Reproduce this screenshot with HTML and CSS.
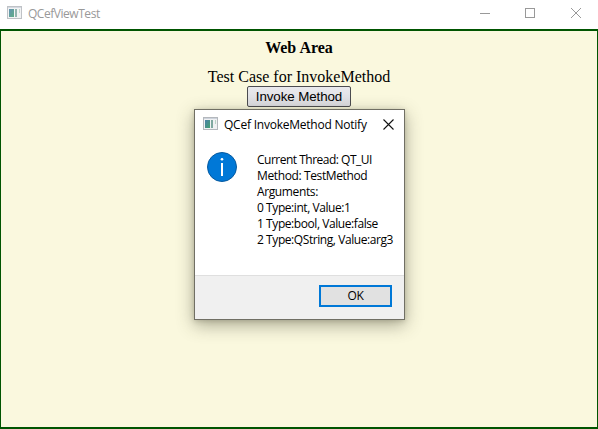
FILE: index.html
```html
<!DOCTYPE html>
<html lang="en">
<head>
<meta charset="utf-8">
<title>QCefViewTest</title>
<link rel="stylesheet" href="styles.css">
</head>
<body>
<svg width="0" height="0" class="defs">
  <defs>
    <linearGradient id="pane" x1="0" y1="0" x2="1" y2="1"><stop offset="0" stop-color="#4a80a8"/><stop offset="1" stop-color="#43a070"/></linearGradient>
    <symbol id="app" viewBox="0 0 15 13">
      <rect x=".5" y=".5" width="14" height="12" fill="#f0f1f3" stroke="#b4b8bd"/>
      <path d="M1 1.5h13" stroke="#cdd3dc"/>
      <rect x="2" y="3" width="5" height="8" fill="url(#pane)"/>
      <rect x="8" y="3" width="2" height="8" fill="#7fa8a0"/>
      <rect x="12" y="3" width="1" height="4" fill="#b9d3c6"/>
    </symbol>
  </defs>
</svg>
<div class="window">
  <header class="titlebar">
    <svg class="app-icon" width="15" height="13"><use href="#app"/></svg>
    <span class="title">QCefViewTest</span>
    <svg class="controls" width="102" height="11" fill="none" stroke="#999">
      <path d="M0 5.5h10"/><rect x="45.5" y=".5" width="9" height="9"/><path d="M91 0l10 10M101 0l-10 10"/>
    </svg>
  </header>
  <main class="web">
    <h1>Web Area</h1>
    <p class="case">Test Case for InvokeMethod</p>
    <button class="invoke"><span>Invoke Method</span></button>
  </main>
  <section class="dialog">
    <header class="dialog-title">
      <svg width="15" height="13"><use href="#app"/></svg>
      <span class="caption">QCef InvokeMethod Notify</span>
      <svg class="close" width="11" height="11" fill="none" stroke="#111" stroke-width="1.1"><path d="M.5.5l10 10M10.5.5l-10 10"/></svg>
    </header>
    <div class="dialog-body">
      <svg class="info" width="30" height="30" viewBox="0 0 30 30">
        <circle cx="15" cy="15" r="14.5" fill="#0078d7" stroke="#075a9f"/>
        <path d="M15 11v13" stroke="#fff" stroke-width="2"/><circle cx="15" cy="7.3" r="1.3" fill="#fff"/>
      </svg>
      <div class="message">
        <div class="l1">Current Thread: QT_UI</div>
        <div class="l2">Method: TestMethod</div>
        <div class="l3">Arguments:</div>
        <div class="l4">0 Type:int, Value:1</div>
        <div class="l5">1 Type:bool, Value:false</div>
        <div class="l6">2 Type:QString, Value:arg3</div>
      </div>
    </div>
    <footer><button class="ok">OK</button></footer>
  </section>
</div>
</body>
</html>
```
FILE: styles.css
```css
* { box-sizing: border-box; }
body { margin: 0; background: #fff; }
.defs { position: absolute; }
.window {
  position: relative;
  display: flex;
  flex-direction: column;
  width: 598px;
  height: 429px;
  overflow: hidden;
  font: 12px/16px "Open Sans", "Noto Sans", sans-serif;
}
.titlebar {
  display: flex;
  height: 29px;
  padding: 0 16px 0 7px;
}
.app-icon { margin-top: 6px; opacity: .85; }
.title { margin: 6px 0 0 6px; color: #999; letter-spacing: -.46px; }
.controls { margin: 8px 0 0 auto; }
.web {
  flex: 1;
  display: flex;
  flex-direction: column;
  align-items: center;
  border: solid #005500;
  border-width: 2px 1px;
  background: #faf8de;
  color: #000;
  font-family: "Liberation Serif", serif;
}
.web h1 { margin: 8px 0 0; font-size: 16px; line-height: 18px; }
.case { margin: 11px 0 0; font-size: 16px; line-height: 18px; white-space: nowrap; }
.invoke {
  width: 104px;
  height: 21px;
  margin-top: 0;
  padding: 0;
  border: 1px solid #4c4c50;
  border-radius: 2px;
  background: linear-gradient(#e9e9ed, #dcdce0);
  color: #000;
  font: 13.333px/17px "Liberation Sans", sans-serif;
  letter-spacing: -.08px;
}
.dialog {
  position: absolute;
  left: 194px;
  top: 109px;
  display: flex;
  flex-direction: column;
  width: 211px;
  height: 211px;
  border: 1px solid #706f64;
  background: #fff;
  color: #000;
  box-shadow: 0 5px 16px rgba(60, 60, 40, .42), 0 1px 5px rgba(60, 60, 40, .2);
  white-space: nowrap;
}
.dialog-title {
  display: flex;
  height: 30px;
  padding: 7px 10px 0 8px;
}
.caption { margin-left: 6px; letter-spacing: -.23px; }
.close { margin: 2px 0 0 auto; }
.dialog-body {
  display: flex;
  flex: 1;
  padding: 12px 0 0 12px;
}
.message { margin-left: 20px; }
footer {
  display: flex;
  justify-content: flex-end;
  height: 44px;
  padding: 9px 12px 0 0;
  border-top: 1px solid #dfdfdf;
  background: #f0f0f0;
}
.ok {
  width: 73px;
  height: 22px;
  padding: 0;
  border: 2px solid #0078d7;
  background: #e1e1e1;
  color: #000;
  font: 12px/18px "Open Sans", sans-serif;
  letter-spacing: -.3px;
}
.l1 { letter-spacing: -.5px; }
.l2, .l3 { letter-spacing: -.38px; }
.l4, .l5, .l6 { letter-spacing: -.43px; }
```
